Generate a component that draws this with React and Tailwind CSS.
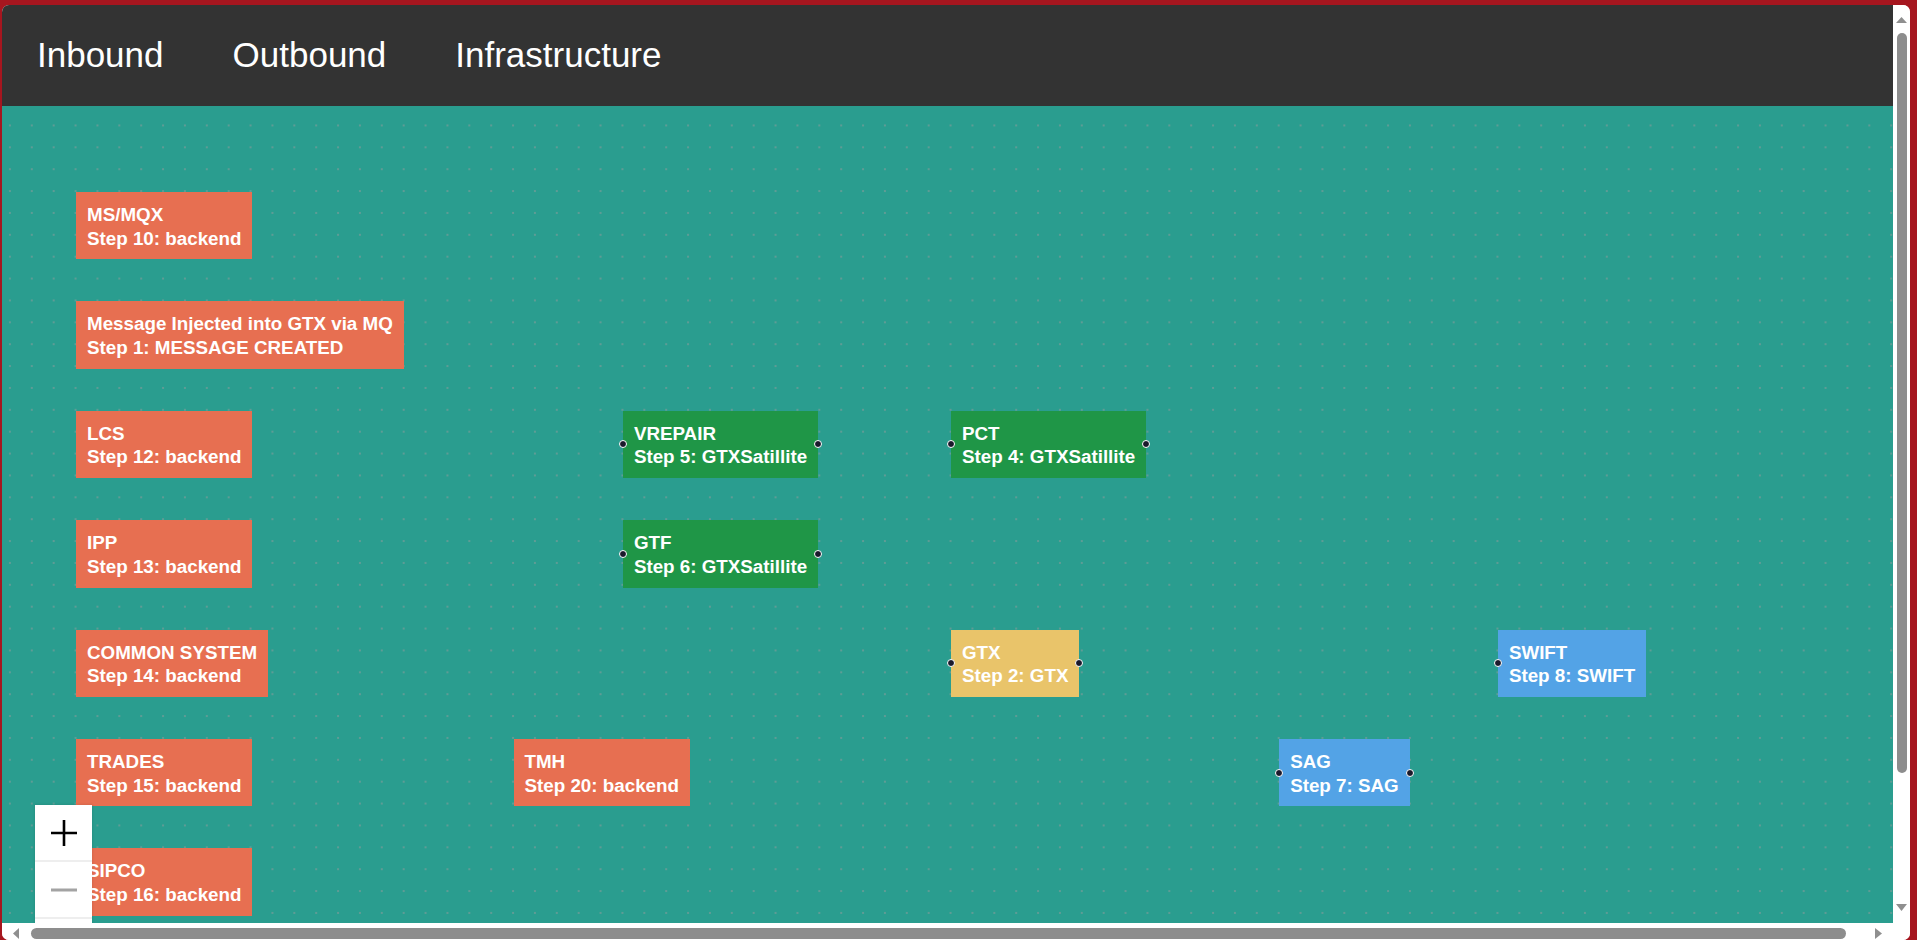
import React from 'react';

// flow coordinates are scaled by the viewport zoom and shifted by its pan
const ZOOM = 1.09375;
const PAN = { x: 74, y: 86 };

const COLORS = {
  backend: 'bg-[#e76f51]',
  satellite: 'bg-[#1f9647]',
  gtx: 'bg-[#e9c46a]',
  swift: 'bg-[#53a3e6]',
};

const nodes = [
  { id: 'msmqx', title: 'MS/MQX', step: 'Step 10: backend', x: 0, y: 0, kind: 'backend' },
  { id: 'msg', title: 'Message Injected into GTX via MQ', step: 'Step 1: MESSAGE CREATED', x: 0, y: 100, kind: 'backend' },
  { id: 'lcs', title: 'LCS', step: 'Step 12: backend', x: 0, y: 200, kind: 'backend' },
  { id: 'ipp', title: 'IPP', step: 'Step 13: backend', x: 0, y: 300, kind: 'backend' },
  { id: 'common', title: 'COMMON SYSTEM', step: 'Step 14: backend', x: 0, y: 400, kind: 'backend' },
  { id: 'trades', title: 'TRADES', step: 'Step 15: backend', x: 0, y: 500, kind: 'backend' },
  { id: 'sipco', title: 'SIPCO', step: 'Step 16: backend', x: 0, y: 600, kind: 'backend' },
  { id: 'vrepair', title: 'VREPAIR', step: 'Step 5: GTXSatillite', x: 500, y: 200, kind: 'satellite', left: true, right: true },
  { id: 'pct', title: 'PCT', step: 'Step 4: GTXSatillite', x: 800, y: 200, kind: 'satellite', left: true, right: true },
  { id: 'gtf', title: 'GTF', step: 'Step 6: GTXSatillite', x: 500, y: 300, kind: 'satellite', left: true, right: true },
  { id: 'gtx', title: 'GTX', step: 'Step 2: GTX', x: 800, y: 400, kind: 'gtx', left: true, right: true },
  { id: 'swift', title: 'SWIFT', step: 'Step 8: SWIFT', x: 1300, y: 400, kind: 'swift', left: true },
  { id: 'tmh', title: 'TMH', step: 'Step 20: backend', x: 400, y: 500, kind: 'backend' },
  { id: 'sag', title: 'SAG', step: 'Step 7: SAG', x: 1100, y: 500, kind: 'swift', left: true, right: true },
];

function Handle({ side }) {
  return (
    <span
      className={`absolute top-1/2 -mt-[4px] h-[8px] w-[8px] rounded-full border border-white bg-[#1a192b] ${
        side === 'left' ? '-left-[4px]' : '-right-[4px]'
      }`}
    />
  );
}

function FlowNode({ node }) {
  return (
    <div
      className={`absolute whitespace-nowrap px-[11px] pt-[11px] pb-[9px] text-[18.8px] font-bold leading-[23.7px] text-white ${COLORS[node.kind]}`}
      style={{ left: PAN.x + node.x * ZOOM, top: PAN.y + node.y * ZOOM }}
    >
      {node.left && <Handle side="left" />}
      <div>{node.title}</div>
      <div>{node.step}</div>
      {node.right && <Handle side="right" />}
    </div>
  );
}

function ZoomControls() {
  return (
    <div className="absolute left-[33px] top-[699px] w-[57px] bg-white shadow-[0_0_2px_1px_rgba(0,0,0,0.08)]">
      <button className="flex h-[57px] w-full items-center justify-center border-b-2 border-[#eeeeee]">
        <svg width="26" height="26" viewBox="0 0 26 26">
          <path d="M13 0v26M0 13h26" stroke="#000" strokeWidth="2.6" />
        </svg>
      </button>
      <button className="flex h-[57px] w-full items-center justify-center border-b-2 border-[#eeeeee]">
        <svg width="26" height="26" viewBox="0 0 26 26">
          <path d="M0 13h26" stroke="#a3a3a3" strokeWidth="3" />
        </svg>
      </button>
      <button className="flex h-[57px] w-full items-center justify-center" />
    </div>
  );
}

export default function App() {
  return (
    <div className="h-screen w-full overflow-hidden bg-[#a6161f] pl-[2px] pr-[7px] pt-[5px] font-['Liberation_Sans',Arial,sans-serif]">
      <div className="grid h-[935px] grid-cols-[1fr_17px] grid-rows-[1fr_17px] overflow-hidden rounded-[7px] bg-white">
        {/* Main area */}
        <div className="flex min-h-0 flex-col overflow-hidden">
          <header className="flex h-[101px] shrink-0 items-center gap-[69px] bg-[#333333] pl-[35px] text-[35px] text-white">
            <a>Inbound</a>
            <a>Outbound</a>
            <a>Infrastructure</a>
          </header>

          {/* Flow canvas */}
          <div className="relative flex-1 overflow-hidden bg-[#2a9d8f] bg-[radial-gradient(circle,#5f9c95_1px,transparent_1.2px)] bg-[length:21.875px_21.875px] bg-[position:-3px_8.5px]">
            {nodes.map((node) => (
              <FlowNode key={node.id} node={node} />
            ))}
            <ZoomControls />
          </div>
        </div>

        {/* Vertical scrollbar */}
        <div className="flex flex-col items-center bg-white">
          <svg className="mt-[12px] shrink-0" width="11" height="6" viewBox="0 0 11 6">
            <polygon points="5.5,0 11,6 0,6" fill="#8f8f8f" />
          </svg>
          <div className="mt-[10px] h-[740px] w-[10px] shrink-0 rounded-full bg-[#8d8d8d]" />
          <div className="flex-1" />
          <svg className="mb-[12px] shrink-0" width="11" height="7" viewBox="0 0 11 7">
            <polygon points="0,0 11,0 5.5,7" fill="#8f8f8f" />
          </svg>
        </div>

        {/* Horizontal scrollbar */}
        <div className="flex items-start bg-white pt-[5px]">
          <svg className="ml-[11px] shrink-0" width="6" height="11" viewBox="0 0 6 11">
            <polygon points="6,0 6,11 0,5.5" fill="#8f8f8f" />
          </svg>
          <div className="ml-[12px] h-[11px] w-[1815px] shrink-0 rounded-full bg-[#8d8d8d]" />
          <div className="flex-1" />
          <svg className="mr-[11px] shrink-0" width="7" height="11" viewBox="0 0 7 11">
            <polygon points="0,0 7,5.5 0,11" fill="#8f8f8f" />
          </svg>
        </div>

        <div className="bg-white" />
      </div>
    </div>
  );
}
